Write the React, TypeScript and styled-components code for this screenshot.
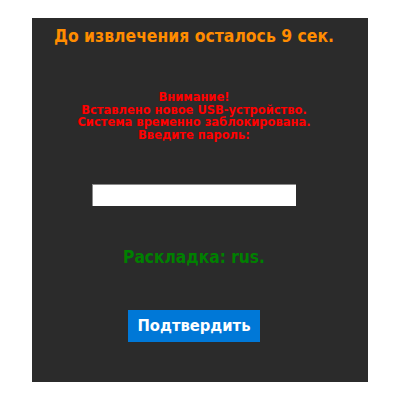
import React from "react";
import styled, { createGlobalStyle } from "styled-components";

const Global = createGlobalStyle`
  html, body { margin: 0; padding: 0; background: #ffffff; }
  body { font-family: "DejaVu Sans", Verdana, sans-serif; }
`;

const Page = styled.div`
  padding: 18px 32px;
`;

const Panel = styled.div`
  width: 336px;
  height: 364px;
  background: #2b2b2b;
  display: flex;
  flex-direction: column;
  align-items: center;
  box-sizing: border-box;
  padding: 7px 12px 0 0;
`;

const Title = styled.div`
  color: #ff8c00;
  font-family: "DejaVu Sans Condensed", "DejaVu Sans", sans-serif;
  font-stretch: condensed;
  font-weight: bold;
  font-size: 17.4px;
  line-height: 22px;
  white-space: nowrap;
`;

const Warning = styled.div`
  margin-top: 44px;
  color: #ff0000;
  font-weight: bold;
  font-size: 11.5px;
  line-height: 12.7px;
  text-align: center;
  white-space: nowrap;
`;

const Input = styled.input`
  margin-top: 42px;
  width: 204px;
  height: 22px;
  box-sizing: border-box;
  border: none;
  border-top: 1px solid #8a8a8a;
  border-left: 1px solid #8a8a8a;
  background: #ffffff;
  padding: 0 2px;
  outline: none;
`;

const Layout = styled.div`
  margin-top: 40px;
  color: #008000;
  font-family: "DejaVu Sans Condensed", "DejaVu Sans", sans-serif;
  font-stretch: condensed;
  font-weight: bold;
  font-size: 17.2px;
  line-height: 22px;
`;

const Button = styled.button`
  margin-top: 42px;
  width: 132px;
  height: 32px;
  background: #0078d7;
  color: #ffffff;
  border: none;
  font-family: "DejaVu Sans Condensed", "DejaVu Sans", sans-serif;
  font-stretch: condensed;
  font-weight: bold;
  font-size: 16.4px;
  padding: 0;
`;

export default function App() {
  return (
    <>
      <Global />
      <Page>
        <Panel>
          <Title>До извлечения осталось 9 сек.</Title>
          <Warning>
            Внимание!
            <br />
            Вставлено новое USB-устройство.
            <br />
            Система временно заблокирована.
            <br />
            Введите пароль:
          </Warning>
          <Input type="password" />
          <Layout>Раскладка: rus.</Layout>
          <Button>Подтвердить</Button>
        </Panel>
      </Page>
    </>
  );
}
